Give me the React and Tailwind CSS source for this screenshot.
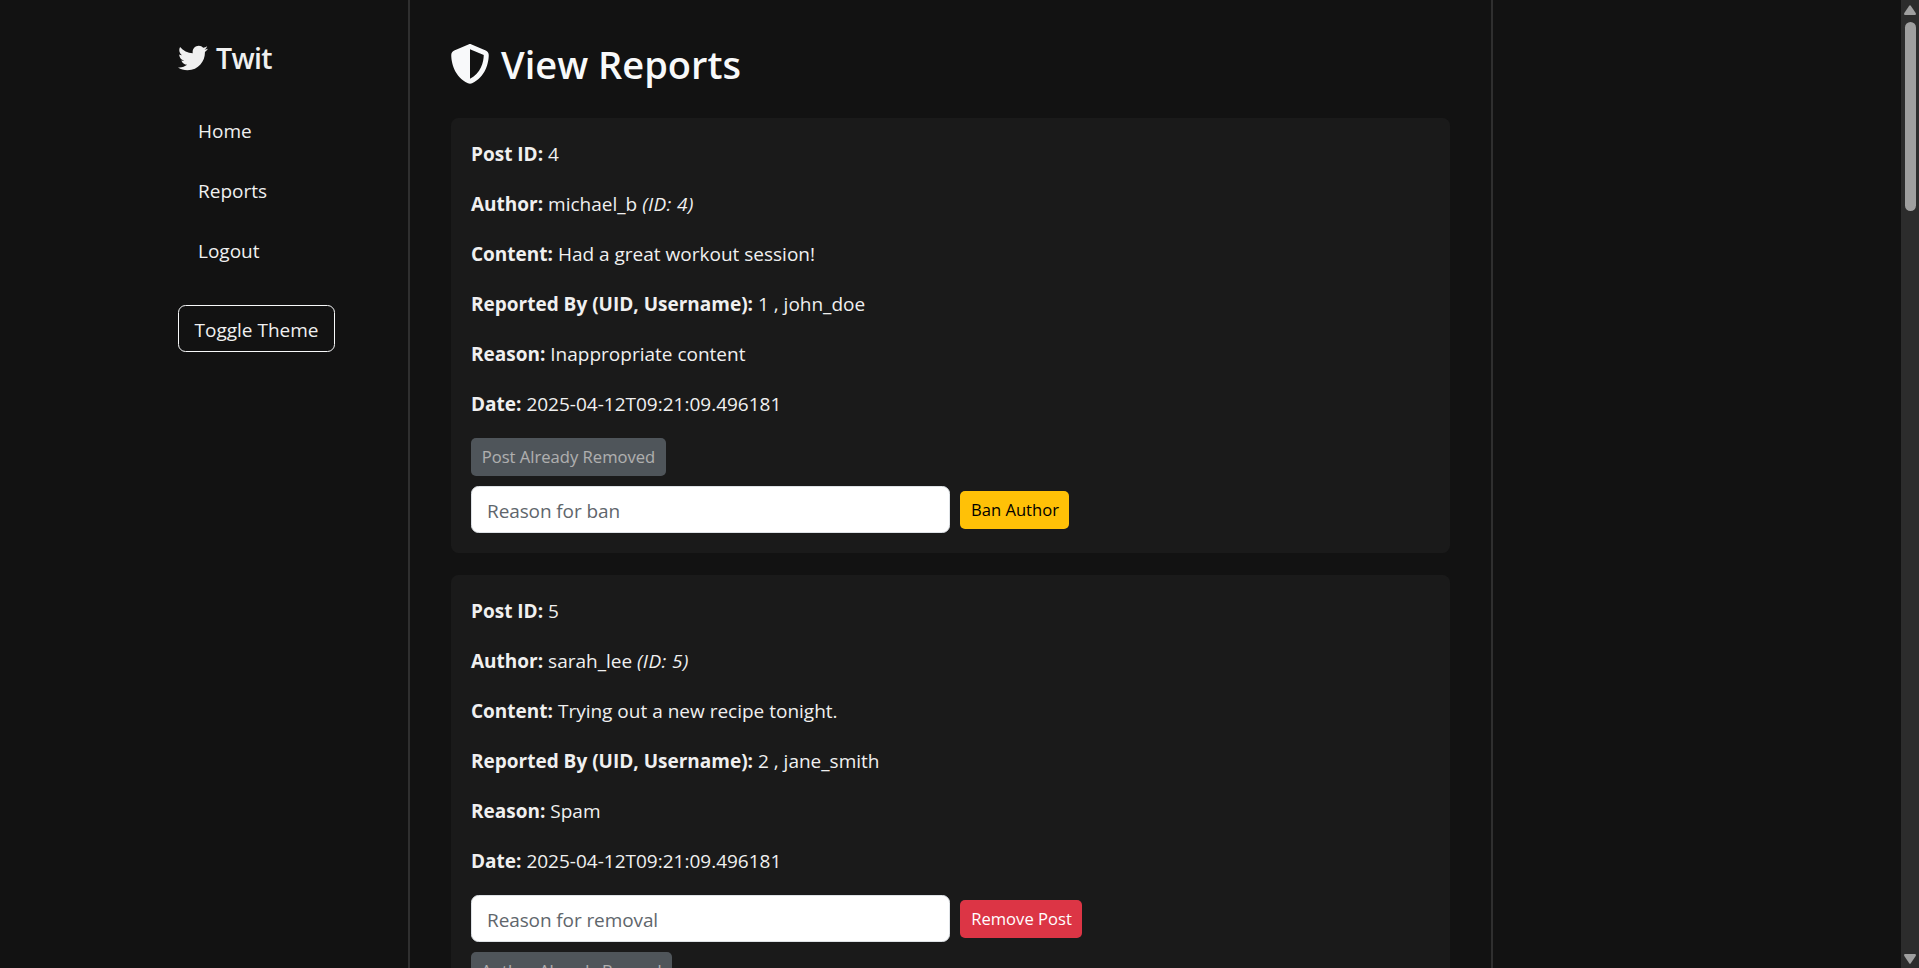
import React from "react";
import { FaTwitter, FaShieldHalved } from "react-icons/fa6";

const reports = [
  {
    id: 4,
    author: "michael_b",
    content: "Had a great workout session!",
    reporter: "1 , john_doe",
    reason: "Inappropriate content",
    date: "2025-04-12T09:21:09.496181",
    postRemoved: true,
    authorBanned: false,
  },
  {
    id: 5,
    author: "sarah_lee",
    content: "Trying out a new recipe tonight.",
    reporter: "2 , jane_smith",
    reason: "Spam",
    date: "2025-04-12T09:21:09.496181",
    postRemoved: false,
    authorBanned: true,
  },
];

function Field({ label, children }) {
  return (
    <p className="mb-5 h-[30px] leading-[32px] whitespace-nowrap">
      <strong className="font-bold">{label}</strong> {children}
    </p>
  );
}

function DisabledButton({ children, className }) {
  return (
    <button
      disabled
      className={`block h-[38px] rounded-[5px] bg-[#6c757d] text-[16.6px] leading-[38px] whitespace-nowrap text-white opacity-65 ${className}`}
    >
      {children}
    </button>
  );
}

function ActionForm({ placeholder, label, className }) {
  return (
    <form className="flex items-center gap-2.5">
      <input
        type="text"
        placeholder={placeholder}
        className="h-[47px] w-[479px] rounded-[7.5px] border border-[#dee2e6] bg-white px-[15px] pt-0.5 text-[19px] tracking-[-0.1px] text-[#212529] placeholder:text-[#5f666c]"
      />
      <button
        type="button"
        className={`h-[38px] rounded-[5px] pl-px text-[16.6px] leading-[38px] whitespace-nowrap ${className}`}
      >
        {label}
      </button>
    </form>
  );
}

function ReportCard({ report }) {
  return (
    <article className="mb-[22px] rounded-[7.5px] bg-[#1a1a1a] p-5">
      <Field label="Post ID:">{report.id}</Field>
      <Field label="Author:">
        {report.author} <em className="tracking-[0.4px]">(ID: {report.id})</em>
      </Field>
      <Field label="Content:">{report.content}</Field>
      <Field label="Reported By (UID, Username):">{report.reporter}</Field>
      <Field label="Reason:">{report.reason}</Field>
      <Field label="Date:">{report.date}</Field>
      <div className="flex flex-col items-start gap-2.5">
        {report.postRemoved ? (
          <DisabledButton className="w-[195px]">Post Already Removed</DisabledButton>
        ) : (
          <ActionForm
            placeholder="Reason for removal"
            label="Remove Post"
            className="w-[122px] bg-[#dc3545] text-white"
          />
        )}
        {report.authorBanned ? (
          <DisabledButton className="w-[201px]">Author Already Banned</DisabledButton>
        ) : (
          <ActionForm
            placeholder="Reason for ban"
            label="Ban Author"
            className="w-[109px] bg-[#ffc107] text-black"
          />
        )}
      </div>
    </article>
  );
}

function Sidebar() {
  return (
    <aside className="flex w-[408px] shrink-0 flex-col items-start pt-[35px] pl-[178px]">
      <div className="flex h-[45px] items-center">
        <FaTwitter className="size-[30px]" />
        <span className="ml-2 pt-0.5 text-[28.5px] leading-[45px] font-semibold tracking-[-0.7px]">Twit</span>
      </div>
      <nav className="mt-[21px] flex flex-col px-5">
        {["Home", "Reports", "Logout"].map((item) => (
          <a key={item} className="h-[60px] leading-[60px]">
            {item}
          </a>
        ))}
      </nav>
      <button className="mt-6 h-[47px] w-[157px] rounded-[7.5px] border border-[#f8f9fa] leading-[48px] whitespace-nowrap">
        Toggle Theme
      </button>
    </aside>
  );
}

function ScrollBar() {
  return (
    <div className="flex w-[18px] shrink-0 flex-col items-center bg-[#2c2c2c]">
      <svg className="mt-[5px] h-[10px] w-3" viewBox="0 0 12 10" fill="#9f9f9f">
        <path d="M5.2.7Q6-.3 6.8.7L11.7 8Q12.4 9.7 11 9.9H1Q-.4 9.7.3 8Z" />
      </svg>
      <div className="mt-[7px] h-[189px] w-[11px] rounded-full bg-[#9f9f9f]" />
      <svg className="mt-auto mb-1 h-[10px] w-3" viewBox="0 0 12 10" fill="#9f9f9f">
        <path d="M5.2 9.3Q6 10.3 6.8 9.3L11.7 2Q12.4.3 11 .1H1Q-.4.3.3 2Z" />
      </svg>
    </div>
  );
}

export default function App() {
  return (
    <div className="flex h-screen overflow-hidden bg-[#121212] font-['Open_Sans','Noto_Sans',sans-serif] text-[19px] text-[#f0f0f0]">
      <Sidebar />
      <main className="w-[1085px] shrink-0 border-x-2 border-[#2f2f2f] px-[41px] pt-10">
        <h1 className="mb-[30px] flex h-12 items-center text-[#f8f9fa]">
          <FaShieldHalved className="-ml-px size-10" />
          <span className="ml-[11px] text-[38px] leading-[48px] font-semibold">View Reports</span>
        </h1>
        {reports.map((report) => (
          <ReportCard key={report.id} report={report} />
        ))}
      </main>
      <div className="flex-1" />
      <ScrollBar />
    </div>
  );
}
